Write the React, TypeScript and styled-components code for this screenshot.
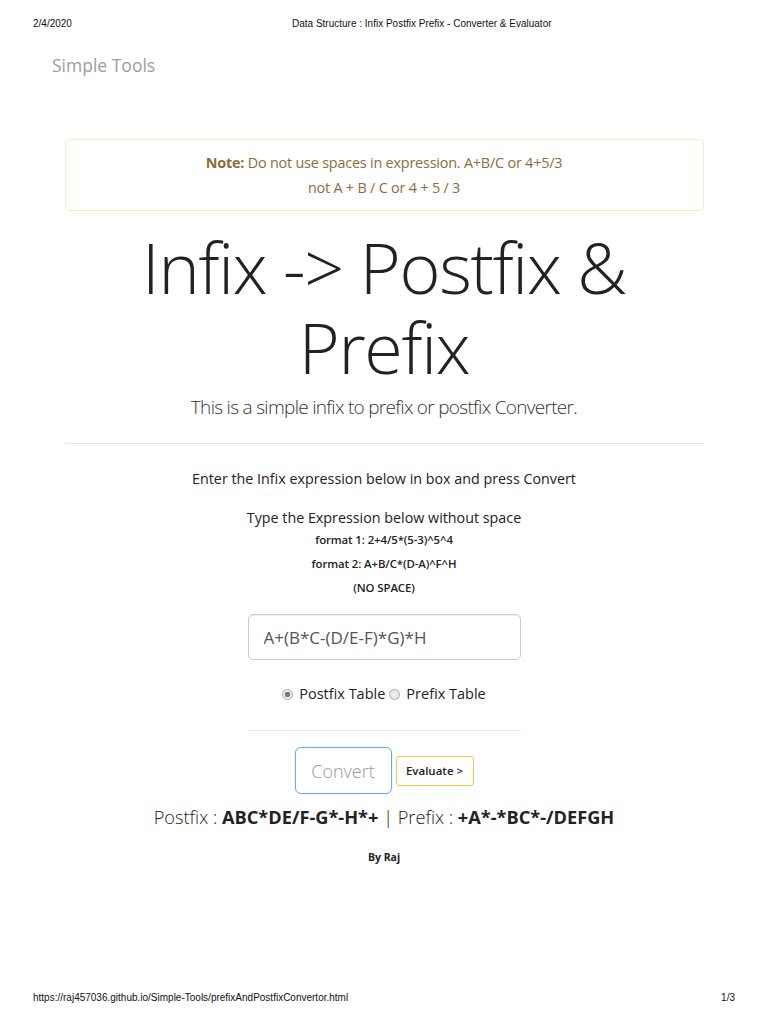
import React from "react";
import styled, { createGlobalStyle } from "styled-components";

const Global = createGlobalStyle`
  html, body { margin: 0; padding: 0; background: #fff; }
  body { font-family: "Open Sans", "Noto Sans", sans-serif; color: #333; }
  * { box-sizing: border-box; }
`;

const Page = styled.div`
  width: 768px;
  height: 1024px;
  display: flex;
  flex-direction: column;
`;

const PrintBar = styled.div<{ $top?: boolean }>`
  display: grid;
  grid-template-columns: 259px auto 1fr;
  align-items: center;
  padding: 0 33px;
  height: 12px;
  margin-top: ${(p) => (p.$top ? "18px" : "0")};
  font-family: "Liberation Sans", Arial, sans-serif;
  font-size: 10px;
  color: #111;
  line-height: 12px;
`;

const PrintLeft = styled.span`
  justify-self: start;
  white-space: nowrap;
`;
const PrintCenter = styled.span`
  justify-self: start;
`;
const PrintRight = styled.span`
  justify-self: end;
`;

const Brand = styled.div`
  margin: 23px 0 0 52px;
  font-size: 17.5px;
  line-height: 24px;
  color: #9d9d9d;
`;

const Container = styled.main`
  width: 639px;
  margin: 62px auto 0;
  display: flex;
  flex-direction: column;
  align-items: center;
  text-align: center;
`;

const Alert = styled.div`
  width: 100%;
  border: 1px solid #faebcc;
  border-radius: 4px;
  padding: 10px 15px;
  color: #8a6d3b;
  font-size: 14.4px;
  line-height: 25px;
  letter-spacing: -0.2px;
`;

const Title = styled.h1`
  margin: 16px 0 0;
  font-size: 70px;
  line-height: 80px;
  font-weight: 300;
  color: #222;
  letter-spacing: -1.3px;
`;

const Lead = styled.p`
  margin: 5px 0 0;
  font-size: 19px;
  line-height: 30px;
  font-weight: 300;
  color: #333;
  letter-spacing: -0.7px;
`;

const Rule = styled.hr<{ $w?: number }>`
  border: 0;
  border-top: 1px solid #e5e5e5;
  width: ${(p) => (p.$w ? `${p.$w}px` : "100%")};
  margin: ${(p) => (p.$w ? "24px 0 0" : "21px 0 0")};
`;

const Instruction = styled.p<{ $gap?: number }>`
  margin: ${(p) => p.$gap ?? 0}px 0 0;
  font-size: 14.3px;
  line-height: 21px;
  color: #222;
`;

const Small = styled.div`
  font-size: 11.4px;
  font-weight: 600;
  line-height: 24px;
  color: #222;
  letter-spacing: -0.1px;
`;

const Input = styled.input`
  margin-top: 14px;
  width: 273px;
  height: 46px;
  padding: 0 15px;
  border: 1px solid #ccc;
  border-radius: 5px;
  box-shadow: inset 0 1px 1px rgba(0, 0, 0, 0.075);
  font-family: "Open Sans", sans-serif;
  font-size: 17px;
  color: #555;
  outline: none;
`;

const RadioRow = styled.div`
  margin-top: 22px;
  display: flex;
  align-items: center;
  gap: 4px;
  font-size: 14.5px;
  line-height: 24px;
  color: #222;
`;

const Radio = styled.input`
  appearance: none;
  width: 11px;
  height: 11px;
  margin: 0 2px 0 0;
  border-radius: 50%;
  border: 1px solid #aaa;
  background: radial-gradient(circle, #f2f2f2 0, #ddd 100%);
  &:checked {
    background: radial-gradient(circle, #777 0, #777 2.5px, #eee 3px, #ddd 100%);
  }
`;

const ButtonRow = styled.div`
  margin-top: 16px;
  display: flex;
  align-items: center;
  gap: 4px;
`;

const ConvertBtn = styled.button`
  width: 97px;
  height: 47px;
  border: 1px solid #66afe9;
  border-radius: 6px;
  background: #fff;
  font-family: "Open Sans", sans-serif;
  font-size: 18px;
  font-weight: 300;
  color: #999;
  box-shadow: 0 0 2px rgba(102, 175, 233, 0.4);
`;

const EvalBtn = styled.button`
  width: 78px;
  height: 30px;
  border: 1px solid #f5c844;
  border-radius: 3px;
  background: #fff;
  font-family: "Open Sans", sans-serif;
  font-size: 11.5px;
  font-weight: 600;
  color: #222;
  padding: 0;
`;

const Result = styled.div`
  margin-top: 11px;
  font-size: 18.2px;
  line-height: 24px;
  font-weight: 300;
  color: #222;
`;

const Strong = styled.b`
  font-weight: 700;
`;

const Byline = styled.div`
  margin-top: 20px;
  font-size: 10.5px;
  font-weight: 700;
  line-height: 16px;
  color: #222;
`;

const Spacer = styled.div<{ $fixed?: number }>`
  flex: ${(p) => (p.$fixed ? `0 0 ${p.$fixed}px` : "1")};
`;

export default function App() {
  return (
    <>
      <Global />
      <Page>
        <PrintBar $top>
          <PrintLeft>2/4/2020</PrintLeft>
          <PrintCenter>Data Structure : Infix Postfix Prefix - Converter &amp; Evaluator</PrintCenter>
          <PrintRight></PrintRight>
        </PrintBar>
        <Brand>Simple Tools</Brand>
        <Container>
          <Alert>
            <Strong>Note:</Strong> Do not use spaces in expression. A+B/C or 4+5/3
            <br />
            not A + B / C or 4 + 5 / 3
          </Alert>
          <Title>
            Infix -&gt; Postfix &amp;
            <br />
            Prefix
          </Title>
          <Lead>This is a simple infix to prefix or postfix Converter.</Lead>
          <Rule />
          <Instruction $gap={24}>Enter the Infix expression below in box and press Convert</Instruction>
          <Instruction $gap={18}>Type the Expression below without space</Instruction>
          <Small>format 1: 2+4/5*(5-3)^5^4</Small>
          <Small>format 2: A+B/C*(D-A)^F^H</Small>
          <Small>(NO SPACE)</Small>
          <Input defaultValue="A+(B*C-(D/E-F)*G)*H" />
          <RadioRow>
            <Radio type="radio" name="t" defaultChecked />
            <span>Postfix Table</span>
            <Radio type="radio" name="t" />
            <span>Prefix Table</span>
          </RadioRow>
          <Rule $w={273} />
          <ButtonRow>
            <ConvertBtn>Convert</ConvertBtn>
            <EvalBtn>Evaluate &gt;</EvalBtn>
          </ButtonRow>
          <Result>
            Postfix : <Strong>ABC*DE/F-G*-H*+</Strong> | Prefix : <Strong>+A*-*BC*-/DEFGH</Strong>
          </Result>
          <Byline>By Raj</Byline>
        </Container>
        <Spacer />
        <PrintBar>
          <PrintLeft>https://raj457036.github.io/Simple-Tools/prefixAndPostfixConvertor.html</PrintLeft>
          <PrintCenter></PrintCenter>
          <PrintRight>1/3</PrintRight>
        </PrintBar>
        <Spacer $fixed={20} />
      </Page>
    </>
  );
}
